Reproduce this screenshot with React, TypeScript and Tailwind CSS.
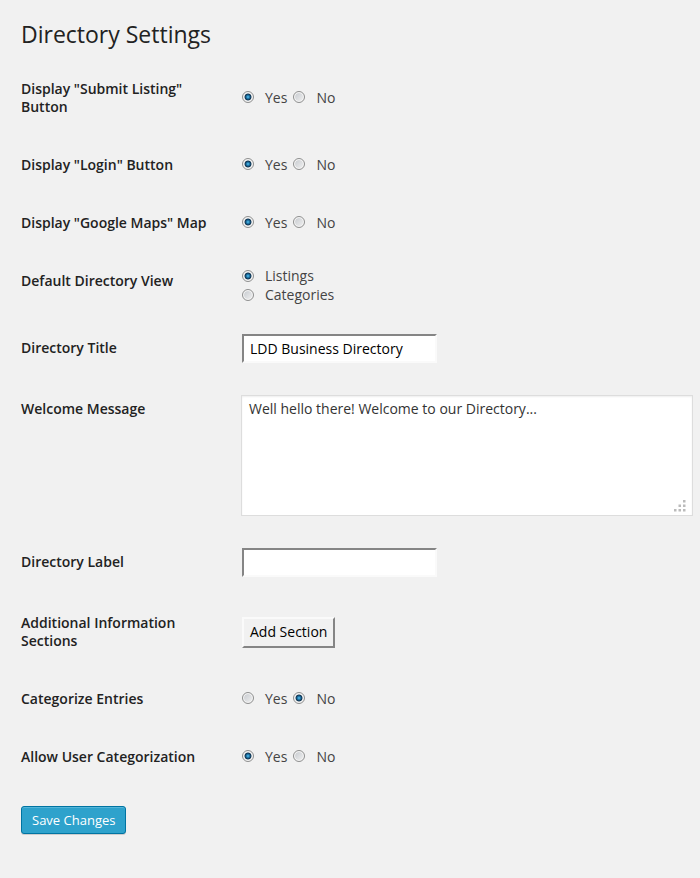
import type { ReactNode } from "react";

const radioClass =
  "size-3 shrink-0 appearance-none rounded-full border border-[#8e8f8f] bg-[#f4f4f4] bg-[linear-gradient(135deg,#c4c8cd,#f2f2f2)] bg-clip-content p-px checked:bg-[radial-gradient(circle_at_50%_50%,#6cc6ee_0px,#2c94c8_1px,#17608f_2px,#12344f_3px,#f4f4f4_4px)] shadow-[inset_0_0_0_1px_#f4f4f4]";

const labelClass = "text-sm leading-[18px] font-semibold text-[#222]";

function Row({
  label,
  htmlFor,
  className = "items-center",
  children,
}: {
  label: string;
  htmlFor?: string;
  className?: string;
  children: ReactNode;
}) {
  return (
    <div className="flex">
      <div className="w-[220px] shrink-0 py-5 pr-5">
        {htmlFor ? (
          <label htmlFor={htmlFor} className={`block ${labelClass}`}>
            {label}
          </label>
        ) : (
          <span className={`block ${labelClass}`}>{label}</span>
        )}
      </div>
      <div className={`flex min-w-0 flex-1 ${className}`}>{children}</div>
    </div>
  );
}

function Choices({
  name,
  legend,
  options,
  selected,
  stacked = false,
}: {
  name: string;
  legend: string;
  options: string[];
  selected: string;
  stacked?: boolean;
}) {
  return (
    <div
      role="radiogroup"
      aria-label={legend}
      className={
        stacked ? "flex flex-col pt-3.5 pb-[15px] pl-px" : "flex gap-1.5 pb-0.5 pl-px"
      }
    >
      {options.map((option) => (
        <label
          key={option}
          className="flex items-center gap-[11px] text-sm leading-[19px] text-[#444]"
        >
          <input
            type="radio"
            name={name}
            defaultChecked={option === selected}
            className={radioClass}
          />
          {option}
        </label>
      ))}
    </div>
  );
}

function YesNo({ label, name, value }: { label: string; name: string; value: string }) {
  return (
    <Row label={label}>
      <Choices name={name} legend={label} options={["Yes", "No"]} selected={value} />
    </Row>
  );
}

function TextRow({ label, id, value }: { label: string; id: string; value: string }) {
  return (
    <Row label={label} htmlFor={id} className="items-start pt-[15px] pb-[17px] pl-px">
      <input
        id={id}
        type="text"
        defaultValue={value}
        className="h-[29px] w-[195px] border-2 border-t-[#858585] border-r-[#fafafa] border-b-[#fafafa] border-l-[#858585] bg-white px-1.5 text-sm text-black"
      />
    </Row>
  );
}

export default function App() {
  return (
    <main className="min-h-screen bg-[#f1f1f1] py-5 pr-[7px] pl-[21px] font-['Open_Sans',sans-serif]">
      <h1 className="pb-3 text-[23px] leading-7 text-[#222]">Directory Settings</h1>
      <form onSubmit={(event) => event.preventDefault()}>
        <YesNo label={'Display "Submit Listing" Button'} name="submit" value="Yes" />
        <YesNo label={'Display "Login" Button'} name="login" value="Yes" />
        <YesNo label={'Display "Google Maps" Map'} name="maps" value="Yes" />
        <Row label="Default Directory View">
          <Choices
            name="view"
            legend="Default Directory View"
            options={["Listings", "Categories"]}
            selected="Listings"
            stacked
          />
        </Row>
        <TextRow label="Directory Title" id="title" value="LDD Business Directory" />
        <Row label="Welcome Message" htmlFor="welcome" className="pt-[15px] pb-[17px]">
          <div className="relative flex flex-1">
            <textarea
              id="welcome"
              defaultValue="Well hello there! Welcome to our Directory..."
              className="h-[121px] w-full resize-none border border-[#ddd] bg-white px-[7px] py-[3px] text-sm leading-[19px] text-[#333] shadow-[inset_0_1px_2px_rgba(0,0,0,0.07)]"
            />
            <svg
              aria-hidden="true"
              viewBox="0 0 12 12"
              className="pointer-events-none absolute right-[7px] bottom-1 size-3"
              fill="#bbb"
            >
              <path d="M9 0h2.500v2.500H9zM4.500 4.500H7V7H4.500zM9 4.500h2.500V7H9zM0 9h2.500v2.500H0zM4.500 9H7v2.500H4.500zM9 9h2.500v2.500H9z" />
            </svg>
          </div>
        </Row>
        <TextRow label="Directory Label" id="label" value="" />
        <Row label="Additional Information Sections" className="items-center pl-px">
          <button
            type="button"
            className="h-[31px] border-2 border-t-[#fafafa] border-r-[#858585] border-b-[#858585] border-l-[#fafafa] bg-[#f1f1f1] px-1.5 text-sm text-black"
          >
            Add Section
          </button>
        </Row>
        <YesNo label="Categorize Entries" name="categorize" value="No" />
        <YesNo label="Allow User Categorization" name="user" value="Yes" />
        <button
          type="submit"
          className="mt-5 block h-7 rounded-[3px] border border-[#0074a2] bg-[#2ea2cc] px-2.5 text-[13px] leading-[26px] text-white shadow-[inset_0_1px_0_rgba(120,200,230,0.5),0_1px_0_rgba(0,0,0,0.15)]"
        >
          Save Changes
        </button>
      </form>
    </main>
  );
}
